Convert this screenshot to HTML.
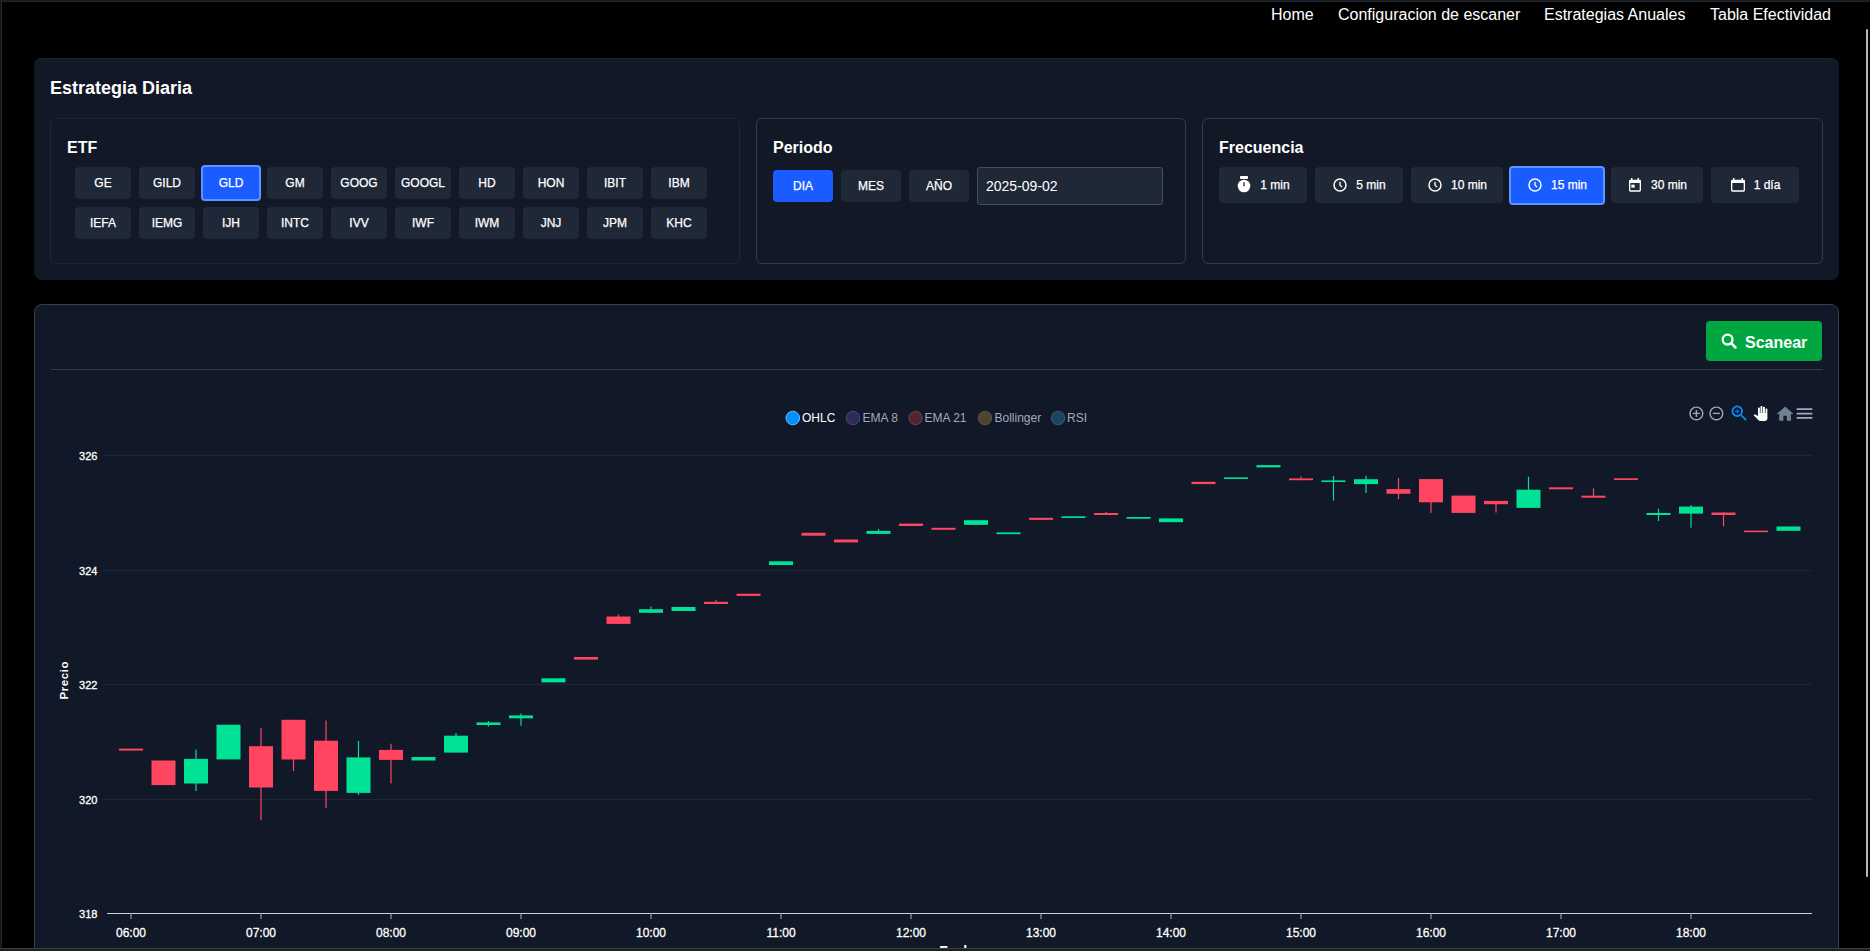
<!DOCTYPE html>
<html>
<head>
<meta charset="utf-8">
<style>
*{box-sizing:border-box;margin:0;padding:0}
html,body{width:1870px;height:951px;overflow:hidden;background:#000;font-family:"Liberation Sans",sans-serif;color:#fff}
.abs{position:absolute}
#frameT{left:0;top:0;width:1870px;height:2px;border-top:1px solid #161b21;background:#20242c}
#frameL{left:0;top:0;width:2px;height:951px;border-left:1px solid #11181e;background:#20232a}
#frameB{left:0;top:948px;width:1870px;height:3px;border-top:1px solid #3b3e43;background:#1e1e1e}
#sbar{left:1866px;top:29px;width:2px;height:848px;background:#b8b8b8;border-radius:1px}
.nav{top:6px;font-size:16px;line-height:18px;color:#fff;white-space:nowrap}
.card{background:#121826;border-radius:8px;box-shadow:inset 0 1px 0 #1a2130}
.sub{border:1px solid #373b49;border-radius:6px;background:#121826}
.h3{font-size:16px;font-weight:bold;line-height:18px;white-space:nowrap}
.btn{background:#1f2837;border-radius:4px;font-size:12px;color:#fff;-webkit-text-stroke:0.25px #fff;display:flex;align-items:center;justify-content:center;white-space:nowrap}
.btn.act{background:#1a5cff}
.btn.ring{border:2px solid #5a96ff;background:#1a5cff}
.fb{gap:8px}
.fb svg{width:16px;height:16px;display:block}
</style>
</head>
<body>

<div class="abs nav" style="left:1271px">Home</div>
<div class="abs nav" style="left:1338px">Configuracion de escaner</div>
<div class="abs nav" style="left:1544px">Estrategias Anuales</div>
<div class="abs nav" style="left:1710px">Tabla Efectividad</div>

<!-- Card 1 -->
<div class="abs card" style="left:34px;top:58px;width:1805px;height:222px"></div>
<div class="abs" style="left:50px;top:78px;font-size:18px;font-weight:bold;line-height:20px;white-space:nowrap">Estrategia Diaria</div>

<!-- ETF -->
<div class="abs sub" style="left:50px;top:118px;width:690px;height:146px;border-color:#1f2433"></div>
<div class="abs h3" style="left:67px;top:139px">ETF</div>
<div class="abs btn" style="left:75px;top:167px;width:56px;height:32px">GE</div>
<div class="abs btn" style="left:139px;top:167px;width:56px;height:32px">GILD</div>
<div class="abs btn ring" style="left:201px;top:165px;width:60px;height:36px">GLD</div>
<div class="abs btn" style="left:267px;top:167px;width:56px;height:32px">GM</div>
<div class="abs btn" style="left:331px;top:167px;width:56px;height:32px">GOOG</div>
<div class="abs btn" style="left:395px;top:167px;width:56px;height:32px">GOOGL</div>
<div class="abs btn" style="left:459px;top:167px;width:56px;height:32px">HD</div>
<div class="abs btn" style="left:523px;top:167px;width:56px;height:32px">HON</div>
<div class="abs btn" style="left:587px;top:167px;width:56px;height:32px">IBIT</div>
<div class="abs btn" style="left:651px;top:167px;width:56px;height:32px">IBM</div>
<div class="abs btn" style="left:75px;top:207px;width:56px;height:32px">IEFA</div>
<div class="abs btn" style="left:139px;top:207px;width:56px;height:32px">IEMG</div>
<div class="abs btn" style="left:203px;top:207px;width:56px;height:32px">IJH</div>
<div class="abs btn" style="left:267px;top:207px;width:56px;height:32px">INTC</div>
<div class="abs btn" style="left:331px;top:207px;width:56px;height:32px">IVV</div>
<div class="abs btn" style="left:395px;top:207px;width:56px;height:32px">IWF</div>
<div class="abs btn" style="left:459px;top:207px;width:56px;height:32px">IWM</div>
<div class="abs btn" style="left:523px;top:207px;width:56px;height:32px">JNJ</div>
<div class="abs btn" style="left:587px;top:207px;width:56px;height:32px">JPM</div>
<div class="abs btn" style="left:651px;top:207px;width:56px;height:32px">KHC</div>

<!-- Periodo -->
<div class="abs sub" style="left:756px;top:118px;width:430px;height:146px"></div>
<div class="abs h3" style="left:773px;top:139px">Periodo</div>
<div class="abs btn act" style="left:773px;top:170px;width:60px;height:32px">DIA</div>
<div class="abs btn" style="left:841px;top:170px;width:60px;height:32px">MES</div>
<div class="abs btn" style="left:909px;top:170px;width:60px;height:32px">AÑO</div>
<div class="abs" style="left:977px;top:167px;width:186px;height:38px;background:#1f2837;border:1px solid #465062;border-radius:3px;font-size:14px;line-height:36px;padding-left:8px">2025-09-02</div>

<!-- Frecuencia -->
<div class="abs sub" style="left:1202px;top:118px;width:621px;height:146px"></div>
<div class="abs h3" style="left:1219px;top:139px">Frecuencia</div>
<div class="abs btn fb" style="left:1219px;top:167px;width:88px;height:36px"><svg viewBox="0 0 24 24" style="overflow:visible"><rect x="6" y="-1.5" width="12" height="4.5" rx="1" fill="#fff"/><circle cx="12" cy="13.5" r="9.5" fill="#fff"/><rect x="11" y="7.5" width="2" height="6.5" rx="1" fill="#1f2837"/></svg><span>1 min</span></div>
<div class="abs btn fb" style="left:1315px;top:167px;width:88px;height:36px"><svg viewBox="0 0 24 24"><circle cx="12" cy="12" r="9" fill="none" stroke="#fff" stroke-width="2.2"/><path d="M12 7v5.2l3.2 3" fill="none" stroke="#fff" stroke-width="2"/></svg><span>5 min</span></div>
<div class="abs btn fb" style="left:1411px;top:167px;width:92px;height:36px"><svg viewBox="0 0 24 24"><circle cx="12" cy="12" r="9" fill="none" stroke="#fff" stroke-width="2.2"/><path d="M12 7v5.2l3.2 3" fill="none" stroke="#fff" stroke-width="2"/></svg><span>10 min</span></div>
<div class="abs btn ring fb" style="left:1509px;top:166px;width:96px;height:39px;padding-bottom:1px"><svg viewBox="0 0 24 24"><circle cx="12" cy="12" r="9" fill="none" stroke="#fff" stroke-width="2.2"/><path d="M12 7v5.2l3.2 3" fill="none" stroke="#fff" stroke-width="2"/></svg><span>15 min</span></div>
<div class="abs btn fb" style="left:1611px;top:167px;width:92px;height:36px"><svg viewBox="0 0 24 24"><path fill="#fff" d="M6 1.5h2.2v3H6zM15.8 1.5H18v3h-2.2z"/><path fill="#fff" d="M5 4h14a2 2 0 0 1 2 2v14a2 2 0 0 1-2 2H5a2 2 0 0 1-2-2V6a2 2 0 0 1 2-2zm0 5v11h14V9z"/><rect x="6.5" y="11.5" width="5" height="4.5" fill="#fff"/></svg><span>30 min</span></div>
<div class="abs btn fb" style="left:1711px;top:167px;width:88px;height:36px"><svg viewBox="0 0 24 24" style="overflow:visible"><path fill="#fff" d="M4.5 1.5h2.2v3H4.5zM17.3 1.5h2.2v3h-2.2z"/><path fill="#fff" d="M3.5 4h17a2 2 0 0 1 2 2v14a2 2 0 0 1-2 2h-17a2 2 0 0 1-2-2V6a2 2 0 0 1 2-2zm0 5v11h17V9z"/></svg><span>1 día</span></div>

<!-- Card 2 -->
<div class="abs" style="left:34px;top:304px;width:1805px;height:660px;background:#111827;border:1px solid #3b3f4b;border-radius:8px"></div>
<div class="abs" style="left:51px;top:369px;width:1772px;height:1px;background:#343b4b"></div>

<svg class="abs" style="left:0;top:0" width="1870" height="951" viewBox="0 0 1870 951">
<rect x="103" y="455.0" width="1709" height="1" fill="#1e2636"/>
<rect x="103" y="570.0" width="1709" height="1" fill="#1e2636"/>
<rect x="103" y="684.0" width="1709" height="1" fill="#1e2636"/>
<rect x="103" y="799.0" width="1709" height="1" fill="#1e2636"/>
<rect x="107" y="913" width="1705" height="1" fill="#c9d1dd"/>
<rect x="130.5" y="913" width="1" height="6" fill="#a9b2c0"/>
<text x="131" y="937" text-anchor="middle" font-family="Liberation Sans" font-size="12" fill="#fff" stroke="#fff" stroke-width="0.3">06:00</text>
<rect x="260.5" y="913" width="1" height="6" fill="#a9b2c0"/>
<text x="261" y="937" text-anchor="middle" font-family="Liberation Sans" font-size="12" fill="#fff" stroke="#fff" stroke-width="0.3">07:00</text>
<rect x="390.5" y="913" width="1" height="6" fill="#a9b2c0"/>
<text x="391" y="937" text-anchor="middle" font-family="Liberation Sans" font-size="12" fill="#fff" stroke="#fff" stroke-width="0.3">08:00</text>
<rect x="520.5" y="913" width="1" height="6" fill="#a9b2c0"/>
<text x="521" y="937" text-anchor="middle" font-family="Liberation Sans" font-size="12" fill="#fff" stroke="#fff" stroke-width="0.3">09:00</text>
<rect x="650.5" y="913" width="1" height="6" fill="#a9b2c0"/>
<text x="651" y="937" text-anchor="middle" font-family="Liberation Sans" font-size="12" fill="#fff" stroke="#fff" stroke-width="0.3">10:00</text>
<rect x="780.5" y="913" width="1" height="6" fill="#a9b2c0"/>
<text x="781" y="937" text-anchor="middle" font-family="Liberation Sans" font-size="12" fill="#fff" stroke="#fff" stroke-width="0.3">11:00</text>
<rect x="910.5" y="913" width="1" height="6" fill="#a9b2c0"/>
<text x="911" y="937" text-anchor="middle" font-family="Liberation Sans" font-size="12" fill="#fff" stroke="#fff" stroke-width="0.3">12:00</text>
<rect x="1040.5" y="913" width="1" height="6" fill="#a9b2c0"/>
<text x="1041" y="937" text-anchor="middle" font-family="Liberation Sans" font-size="12" fill="#fff" stroke="#fff" stroke-width="0.3">13:00</text>
<rect x="1170.5" y="913" width="1" height="6" fill="#a9b2c0"/>
<text x="1171" y="937" text-anchor="middle" font-family="Liberation Sans" font-size="12" fill="#fff" stroke="#fff" stroke-width="0.3">14:00</text>
<rect x="1300.5" y="913" width="1" height="6" fill="#a9b2c0"/>
<text x="1301" y="937" text-anchor="middle" font-family="Liberation Sans" font-size="12" fill="#fff" stroke="#fff" stroke-width="0.3">15:00</text>
<rect x="1430.5" y="913" width="1" height="6" fill="#a9b2c0"/>
<text x="1431" y="937" text-anchor="middle" font-family="Liberation Sans" font-size="12" fill="#fff" stroke="#fff" stroke-width="0.3">16:00</text>
<rect x="1560.5" y="913" width="1" height="6" fill="#a9b2c0"/>
<text x="1561" y="937" text-anchor="middle" font-family="Liberation Sans" font-size="12" fill="#fff" stroke="#fff" stroke-width="0.3">17:00</text>
<rect x="1690.5" y="913" width="1" height="6" fill="#a9b2c0"/>
<text x="1691" y="937" text-anchor="middle" font-family="Liberation Sans" font-size="12" fill="#fff" stroke="#fff" stroke-width="0.3">18:00</text>
<text x="97.4" y="459.7" text-anchor="end" font-family="Liberation Sans" font-size="11" fill="#fff" stroke="#fff" stroke-width="0.3">326</text>
<text x="97.4" y="574.7" text-anchor="end" font-family="Liberation Sans" font-size="11" fill="#fff" stroke="#fff" stroke-width="0.3">324</text>
<text x="97.4" y="688.7" text-anchor="end" font-family="Liberation Sans" font-size="11" fill="#fff" stroke="#fff" stroke-width="0.3">322</text>
<text x="97.4" y="803.7" text-anchor="end" font-family="Liberation Sans" font-size="11" fill="#fff" stroke="#fff" stroke-width="0.3">320</text>
<text x="97.4" y="917.7" text-anchor="end" font-family="Liberation Sans" font-size="11" fill="#fff" stroke="#fff" stroke-width="0.3">318</text>
<text transform="translate(68.3 680.2) rotate(-90)" text-anchor="middle" font-family="Liberation Sans" font-size="11.5" letter-spacing="0.6" font-weight="bold" fill="#fff">Precio</text>
<text x="959.4" y="956.3" text-anchor="middle" font-family="Liberation Sans" font-size="14" font-weight="bold" fill="#fff">Fecha</text>
<rect x="119.0" y="748.6" width="24" height="2.0" fill="#ff4560"/>
<rect x="151.5" y="760.5" width="24" height="24.6" fill="#ff4560"/>
<rect x="195.4" y="749.6" width="1.2" height="41.39999999999998" fill="#00e396"/>
<rect x="184.0" y="758.9" width="24" height="24.6" fill="#00e396"/>
<rect x="216.5" y="724.7" width="24" height="34.7" fill="#00e396"/>
<rect x="260.4" y="728" width="1.2" height="92.29999999999995" fill="#ff4560"/>
<rect x="249.0" y="746.2" width="24" height="41.3" fill="#ff4560"/>
<rect x="292.9" y="719.8" width="1.2" height="51.200000000000045" fill="#ff4560"/>
<rect x="281.5" y="719.8" width="24" height="39.7" fill="#ff4560"/>
<rect x="325.4" y="720.5" width="1.2" height="87.5" fill="#ff4560"/>
<rect x="314.0" y="740.7" width="24" height="50.2" fill="#ff4560"/>
<rect x="357.9" y="741" width="1.2" height="54" fill="#00e396"/>
<rect x="346.5" y="757.4" width="24" height="35.5" fill="#00e396"/>
<rect x="390.4" y="743.7" width="1.2" height="39.69999999999993" fill="#ff4560"/>
<rect x="379.0" y="749.9" width="24" height="10.0" fill="#ff4560"/>
<rect x="411.5" y="757" width="24" height="3.5" fill="#00e396"/>
<rect x="455.4" y="733" width="1.2" height="19.600000000000023" fill="#00e396"/>
<rect x="444.0" y="735.7" width="24" height="16.9" fill="#00e396"/>
<rect x="487.9" y="721" width="1.2" height="5.5" fill="#00e396"/>
<rect x="476.5" y="722.4" width="24" height="2.6" fill="#00e396"/>
<rect x="520.4" y="713.6" width="1.2" height="12.100000000000023" fill="#00e396"/>
<rect x="509.0" y="715.4" width="24" height="2.9" fill="#00e396"/>
<rect x="541.5" y="678.3" width="24" height="4.1" fill="#00e396"/>
<rect x="574.0" y="657" width="24" height="2.6" fill="#ff4560"/>
<rect x="617.9" y="614.5" width="1.2" height="9.399999999999977" fill="#ff4560"/>
<rect x="606.5" y="616.5" width="24" height="7.4" fill="#ff4560"/>
<rect x="650.4" y="606.5" width="1.2" height="6.2999999999999545" fill="#00e396"/>
<rect x="639.0" y="609.2" width="24" height="3.6" fill="#00e396"/>
<rect x="671.5" y="607" width="24" height="4.0" fill="#00e396"/>
<rect x="715.4" y="600" width="1.2" height="4" fill="#ff4560"/>
<rect x="704.0" y="601.8" width="24" height="2.2" fill="#ff4560"/>
<rect x="736.5" y="593.7" width="24" height="2.2" fill="#ff4560"/>
<rect x="769.0" y="561.3" width="24" height="3.7" fill="#00e396"/>
<rect x="801.5" y="532.8" width="24" height="2.9" fill="#ff4560"/>
<rect x="834.0" y="539.5" width="24" height="2.9" fill="#ff4560"/>
<rect x="877.9" y="529" width="1.2" height="4.899999999999977" fill="#00e396"/>
<rect x="866.5" y="530.9" width="24" height="3.0" fill="#00e396"/>
<rect x="899.0" y="523.6" width="24" height="2.4" fill="#ff4560"/>
<rect x="931.5" y="527.8" width="24" height="2.0" fill="#ff4560"/>
<rect x="964.0" y="520.2" width="24" height="4.7" fill="#00e396"/>
<rect x="996.5" y="532.4" width="24" height="1.8" fill="#00e396"/>
<rect x="1029.0" y="517.8" width="24" height="2.1" fill="#ff4560"/>
<rect x="1061.5" y="516.3" width="24" height="1.7" fill="#00e396"/>
<rect x="1105.4" y="512" width="1.2" height="3" fill="#ff4560"/>
<rect x="1094.0" y="513" width="24" height="2.0" fill="#ff4560"/>
<rect x="1126.5" y="517" width="24" height="1.7" fill="#00e396"/>
<rect x="1159.0" y="518.4" width="24" height="3.8" fill="#00e396"/>
<rect x="1191.5" y="481.8" width="24" height="2.3" fill="#ff4560"/>
<rect x="1224.0" y="477.4" width="24" height="1.6" fill="#00e396"/>
<rect x="1256.5" y="465.1" width="24" height="2.3" fill="#00e396"/>
<rect x="1300.4" y="476.5" width="1.2" height="3.6999999999999886" fill="#ff4560"/>
<rect x="1289.0" y="478.4" width="24" height="1.8" fill="#ff4560"/>
<rect x="1332.9" y="475.9" width="1.2" height="24.700000000000045" fill="#00e396"/>
<rect x="1321.5" y="480.4" width="24" height="1.6" fill="#00e396"/>
<rect x="1365.4" y="475.9" width="1.2" height="17.100000000000023" fill="#00e396"/>
<rect x="1354.0" y="479.2" width="24" height="4.9" fill="#00e396"/>
<rect x="1397.9" y="477.9" width="1.2" height="21.200000000000045" fill="#ff4560"/>
<rect x="1386.5" y="489.1" width="24" height="4.7" fill="#ff4560"/>
<rect x="1430.4" y="479.1" width="1.2" height="33.799999999999955" fill="#ff4560"/>
<rect x="1419.0" y="479.1" width="24" height="23.2" fill="#ff4560"/>
<rect x="1451.5" y="495.6" width="24" height="17.3" fill="#ff4560"/>
<rect x="1495.4" y="500.9" width="1.2" height="11.700000000000045" fill="#ff4560"/>
<rect x="1484.0" y="500.9" width="24" height="3.3" fill="#ff4560"/>
<rect x="1527.9" y="476.8" width="1.2" height="31.099999999999966" fill="#00e396"/>
<rect x="1516.5" y="489.7" width="24" height="18.2" fill="#00e396"/>
<rect x="1549.0" y="487.3" width="24" height="2.0" fill="#ff4560"/>
<rect x="1592.9" y="488.4" width="1.2" height="9.300000000000011" fill="#ff4560"/>
<rect x="1581.5" y="495.7" width="24" height="2.0" fill="#ff4560"/>
<rect x="1614.0" y="478.3" width="24" height="1.7" fill="#ff4560"/>
<rect x="1657.9" y="508.7" width="1.2" height="12.300000000000011" fill="#00e396"/>
<rect x="1646.5" y="513" width="24" height="2.0" fill="#00e396"/>
<rect x="1690.4" y="505" width="1.2" height="22.700000000000045" fill="#00e396"/>
<rect x="1679.0" y="506.6" width="24" height="7.0" fill="#00e396"/>
<rect x="1722.9" y="512.5" width="1.2" height="14.0" fill="#ff4560"/>
<rect x="1711.5" y="512.5" width="24" height="2.5" fill="#ff4560"/>
<rect x="1744.0" y="530.6" width="24" height="1.6" fill="#ff4560"/>
<rect x="1776.5" y="526.5" width="24" height="4.3" fill="#00e396"/>
<circle cx="792.8" cy="418" r="6.8" fill="#008ffb" stroke="#66bbff" stroke-width="1"/>
<text x="802" y="422" font-family="Liberation Sans" font-size="12" fill="#fff">OHLC</text>
<circle cx="853" cy="418" r="6.8" fill="#2d2a5c" stroke="#ffffff" stroke-opacity="0.18" stroke-width="1"/>
<text x="862.5" y="422" font-family="Liberation Sans" font-size="12" fill="#a3a8ba">EMA 8</text>
<circle cx="915.6" cy="418" r="6.8" fill="#54252f" stroke="#ffffff" stroke-opacity="0.18" stroke-width="1"/>
<text x="924.5" y="422" font-family="Liberation Sans" font-size="12" fill="#a3a8ba">EMA 21</text>
<circle cx="985" cy="418" r="6.8" fill="#50432e" stroke="#ffffff" stroke-opacity="0.18" stroke-width="1"/>
<text x="994.5" y="422" font-family="Liberation Sans" font-size="12" fill="#a3a8ba">Bollinger</text>
<circle cx="1058" cy="418" r="6.8" fill="#19465f" stroke="#ffffff" stroke-opacity="0.18" stroke-width="1"/>
<text x="1067" y="422" font-family="Liberation Sans" font-size="12" fill="#a3a8ba">RSI</text>
</svg>
<div class="abs" style="left:1706px;top:321px;width:116px;height:40px;background:#00a640;border-radius:4px"></div>
<svg class="abs" style="left:1720px;top:332px" width="18" height="18" viewBox="0 0 18 18"><circle cx="7.6" cy="7.6" r="4.9" fill="none" stroke="#fff" stroke-width="2.3"/><path d="M11.2 11.2l4.3 4.3" stroke="#fff" stroke-width="2.5" stroke-linecap="round"/></svg>
<div class="abs" style="left:1745px;top:333.5px;font-size:16px;font-weight:bold;line-height:18px;white-space:nowrap">Scanear</div>
<svg class="abs" style="left:1687.9px;top:405.2px" width="16.8" height="16.8" viewBox="0 0 24 24"><path fill="#a4acb9" d="M13 7h-2v4H7v2h4v4h2v-4h4v-2h-4V7zm-1-5C6.48 2 2 6.48 2 12s4.48 10 10 10 10-4.48 10-10S17.52 2 12 2zm0 18c-4.41 0-8-3.59-8-8s3.59-8 8-8 8 3.59 8 8-3.59 8-8 8z"/></svg>
<svg class="abs" style="left:1707.7px;top:405.2px" width="16.8" height="16.8" viewBox="0 0 24 24"><path fill="#a4acb9" d="M7 11v2h10v-2H7zm5-9C6.48 2 2 6.48 2 12s4.48 10 10 10 10-4.48 10-10S17.52 2 12 2zm0 18c-4.41 0-8-3.59-8-8s3.59-8 8-8 8 3.59 8 8-3.59 8-8 8z"/></svg>
<svg class="abs" style="left:1729px;top:403px" width="20.9" height="20.9" viewBox="0 0 24 24"><path fill="#008ffb" d="M15.5 14h-.79l-.28-.27C15.41 12.590 16 11.11 16 9.5 16 5.910 13.09 3 9.5 3S3 5.910 3 9.5 5.910 16 9.5 16c1.610 0 3.090-.59 4.230-1.570l.27.28v.79l5 4.990L20.490 19l-4.990-5zm-6 0C7.010 14 5 11.990 5 9.5S7.010 5 9.5 5 14 7.010 14 9.5 11.990 14 9.5 14z"/><path fill="#008ffb" d="M12 10h-2v2H9v-2H7V9h2V7h1v2h2v1z"/></svg>
<svg class="abs" style="left:1752.6px;top:405.6px" width="15" height="15" viewBox="0 0 24 24"><path fill="#fff" d="M23 5.5V20c0 2.2-1.8 4-4 4h-7.3c-1.08 0-2.1-.43-2.85-1.19L1 14.83s1.260-1.230 1.300-1.250c.22-.19.49-.29.79-.29.22 0 .42.06.6.16.04.01 4.310 2.460 4.310 2.460V4c0-.83.67-1.5 1.5-1.5S11 3.170 11 4v7h1V1.5c0-.83.67-1.5 1.5-1.5S15 .67 15 1.5V11h1V2.5c0-.83.67-1.5 1.5-1.5s1.5.67 1.5 1.5V11h1V5.5c0-.83.67-1.5 1.5-1.5s1.5.67 1.5 1.5z"/></svg>
<svg class="abs" style="left:1774.5px;top:403.5px" width="20.2" height="20.2" viewBox="0 0 24 24"><path fill="#6e8192" d="M10 20v-6h4v6h5v-8h3L12 3 2 12h3v8z"/></svg>
<svg class="abs" style="left:1793.8px;top:403.3px" width="21" height="21" viewBox="0 0 24 24"><path fill="#a3a8c2" d="M3 18h18v-2H3v2zm0-5h18v-2H3v2zm0-7v2h18V6H3z"/></svg>
<div id="frameT" class="abs"></div>
<div id="frameL" class="abs"></div>
<div id="frameB" class="abs"></div>
<div id="sbar" class="abs"></div>

</body>
</html>
